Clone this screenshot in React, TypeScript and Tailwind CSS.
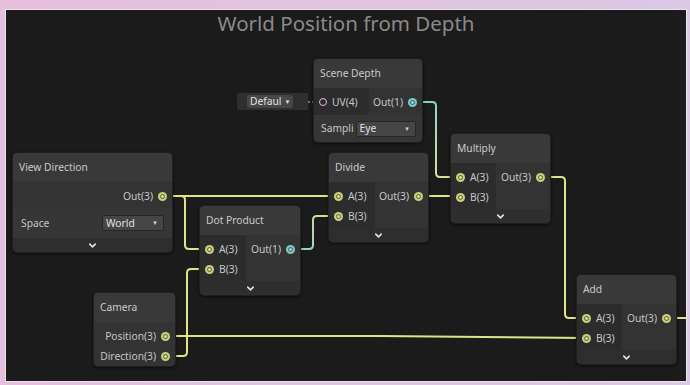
import React, { ReactNode } from 'react';
import { ChevronDown } from 'lucide-react';

type PortKind = 'y' | 'c' | 'hollow';

interface PortDef {
  label: string;
  kind: PortKind;
}

interface NodeDef {
  title: string;
  x: number;
  y: number;
  w: number;
  inW: number;
  inputs: PortDef[];
  outputs: PortDef[];
  padTop: number;
  padBottom: number;
  setting?: ReactNode;
  collapse: boolean;
}

const Port = ({ kind }: { kind: PortKind }) => {
  if (kind === 'hollow') {
    return <span className="w-[8px] h-[8px] rounded-full border border-[#e6b8dd] shrink-0" />;
  }
  if (kind === 'c') {
    return (
      <span className="w-[9px] h-[9px] rounded-full bg-[#7fc8ca] flex items-center justify-center shrink-0">
        <span className="w-[5px] h-[5px] rounded-full border border-[#3d6263] bg-[#8fd8da]" />
      </span>
    );
  }
  return (
    <span className="w-[9px] h-[9px] rounded-full bg-[#c9cf7c] flex items-center justify-center shrink-0">
      <span className="w-[5px] h-[5px] rounded-full border border-[#5c6038] bg-[#d8de8a]" />
    </span>
  );
};

const Dropdown = ({ value, className }: { value: string; className: string }) => (
  <div
    className={`flex items-center justify-between h-[16px] pl-[3px] pr-[5px] bg-[#454545] border border-[#262626] rounded-[2px] text-[#e2e2e2] ${className}`}
  >
    <span>{value}</span>
    <span className="text-[6px] text-[#cfcfcf]">▼</span>
  </div>
);

const nodes: NodeDef[] = [
  {
    title: 'Scene Depth',
    x: 313,
    y: 58,
    w: 110,
    inW: 55,
    inputs: [{ label: 'UV(4)', kind: 'hollow' }],
    outputs: [{ label: 'Out(1)', kind: 'c' }],
    padTop: 4,
    padBottom: 3,
    setting: (
      <div className="h-[27px] flex items-center pl-[7px] pr-[6px] gap-[2px] bg-[#363636]">
        <span className="w-[33px] whitespace-nowrap">Sampli</span>
        <Dropdown value="Eye" className="w-[63px]" />
      </div>
    ),
    collapse: false,
  },
  {
    title: 'View Direction',
    x: 12,
    y: 152,
    w: 161,
    inW: 0,
    inputs: [],
    outputs: [{ label: 'Out(3)', kind: 'y' }],
    padTop: 4,
    padBottom: 2,
    setting: (
      <div className="h-[30px] flex items-center justify-between pl-[8px] pr-[8px] bg-[#363636]">
        <span>Space</span>
        <Dropdown value="World" className="w-[62px]" />
      </div>
    ),
    collapse: true,
  },
  {
    title: 'Divide',
    x: 328,
    y: 152,
    w: 101,
    inW: 46,
    inputs: [
      { label: 'A(3)', kind: 'y' },
      { label: 'B(3)', kind: 'y' },
    ],
    outputs: [{ label: 'Out(3)', kind: 'y' }],
    padTop: 4,
    padBottom: 2,
    collapse: true,
  },
  {
    title: 'Multiply',
    x: 450,
    y: 133,
    w: 101,
    inW: 45,
    inputs: [
      { label: 'A(3)', kind: 'y' },
      { label: 'B(3)', kind: 'y' },
    ],
    outputs: [{ label: 'Out(3)', kind: 'y' }],
    padTop: 4,
    padBottom: 2,
    collapse: true,
  },
  {
    title: 'Dot Product',
    x: 199,
    y: 205,
    w: 102,
    inW: 46,
    inputs: [
      { label: 'A(3)', kind: 'y' },
      { label: 'B(3)', kind: 'y' },
    ],
    outputs: [{ label: 'Out(1)', kind: 'c' }],
    padTop: 4,
    padBottom: 2,
    collapse: true,
  },
  {
    title: 'Camera',
    x: 93,
    y: 292,
    w: 83,
    inW: 0,
    inputs: [],
    outputs: [
      { label: 'Position(3)', kind: 'y' },
      { label: 'Direction(3)', kind: 'y' },
    ],
    padTop: 4,
    padBottom: 0,
    collapse: false,
  },
  {
    title: 'Add',
    x: 576,
    y: 274,
    w: 101,
    inW: 45,
    inputs: [
      { label: 'A(3)', kind: 'y' },
      { label: 'B(3)', kind: 'y' },
    ],
    outputs: [{ label: 'Out(3)', kind: 'y' }],
    padTop: 4,
    padBottom: 2,
    collapse: true,
  },
];

const GraphNode = ({ node }: { node: NodeDef }) => (
  <div
    className="absolute rounded-[5px] overflow-hidden border border-[#202020] shadow-[0_1px_3px_rgba(0,0,0,0.6)] text-[10.25px] leading-none text-[#c6c6c6]"
    style={{ left: node.x - 6, top: node.y - 10, width: node.w }}
  >
    <div className="h-[29px] flex items-center px-[6px] bg-[#393939] text-[#cacaca]">{node.title}</div>
    <div className="flex">
      {node.inW > 0 && (
        <div
          className="bg-[#2c2c2c] shrink-0"
          style={{ width: node.inW, paddingTop: node.padTop, paddingBottom: node.padBottom }}
        >
          {node.inputs.map(p => (
            <div key={p.label} className="h-[20px] flex items-center pl-[5px] gap-[5px]">
              <Port kind={p.kind} />
              <span>{p.label}</span>
            </div>
          ))}
        </div>
      )}
      <div
        className="flex-1 bg-[#333333]"
        style={{ paddingTop: node.padTop, paddingBottom: node.padBottom }}
      >
        {node.outputs.map(p => (
          <div key={p.label} className="h-[20px] flex items-center justify-end pr-[5px] gap-[5px]">
            <span>{p.label}</span>
            <Port kind={p.kind} />
          </div>
        ))}
      </div>
    </div>
    {node.setting}
    {node.collapse && (
      <div className="h-[14px] flex items-center justify-center bg-[#2e2e2e]">
        <ChevronDown size={11} strokeWidth={3.5} className="text-[#e0e0e0]" />
      </div>
    )}
  </div>
);

const YELLOW = '#dfe489';

export default function App() {
  return (
    <div className="w-[690px] h-[385px] bg-gradient-to-r from-[#e6bfdc] to-[#dac8e4] pt-[9px] pl-[5px] font-['Noto_Sans',sans-serif]">
      <div className="relative w-[682px] h-[373px] border border-[#ece4ec] bg-[#1b1b1b] overflow-hidden">
        <h1 className="text-center text-[20.5px] leading-[26px] text-[#8a8a8a]">World Position from Depth</h1>

        <svg className="absolute inset-0" width="680" height="371" fill="none">
          <defs>
            <linearGradient id="g1" gradientUnits="userSpaceOnUse" x1="291" y1="249" x2="338" y2="216">
              <stop offset="0" stopColor="#7fd3d2" />
              <stop offset="1" stopColor={YELLOW} />
            </linearGradient>
            <linearGradient id="g2" gradientUnits="userSpaceOnUse" x1="414" y1="102" x2="459" y2="177">
              <stop offset="0" stopColor="#7fd3d2" />
              <stop offset="1" stopColor={YELLOW} />
            </linearGradient>
          </defs>
          <g transform="translate(-6 -10)" strokeWidth="2" strokeLinecap="round">
            <path d="M163 196 H338" stroke={YELLOW} />
            <path d="M163 196 H181 Q185 196 185 200 V245 Q185 249 189 249 H209" stroke={YELLOW} />
            <path d="M291 249 H309 Q313 249 313 245 V220 Q313 216 317 216 H338" stroke="url(#g1)" />
            <path d="M419 196 H459" stroke={YELLOW} />
            <path d="M414 102 H432 Q436 102 436 106 V173 Q436 177 440 177 H459" stroke="url(#g2)" />
            <path d="M541 177 H561 Q565 177 565 181 V314 Q565 318 569 318 H586" stroke={YELLOW} />
            <path d="M165 336 H380 L586 338" stroke={YELLOW} />
            <path d="M165 356 H183 Q187 356 187 352 V273 Q187 269 191 269 H209" stroke={YELLOW} />
            <path d="M667 318 H690" stroke={YELLOW} />
            <path d="M300 102 H322" stroke="#e6b8dd" strokeWidth="1" strokeDasharray="2 2" strokeLinecap="butt" />
            <circle cx="300" cy="102" r="2" fill="#e6b8dd" stroke="none" />
          </g>
        </svg>

        {/* inline default value for the UV slot */}
        <div className="absolute left-[231px] top-[83px] w-[71px] h-[17px] flex items-center pl-[10px] bg-[#2f2f2f] rounded-l-[2px] text-[10.25px] leading-none">
          <div className="h-[13px] flex items-center gap-[3px] px-[3px] bg-[#474747] rounded-[2px] text-[#e2e2e2]">
            <span>Defaul</span>
            <span className="text-[6px]">▼</span>
          </div>
        </div>

        {nodes.map(n => (
          <GraphNode key={n.title} node={n} />
        ))}
      </div>
    </div>
  );
}
